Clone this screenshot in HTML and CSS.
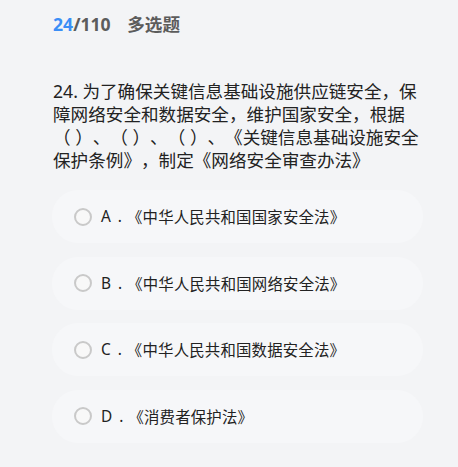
FILE: index.html
```html
<!DOCTYPE html>
<html lang="zh-CN">
<head>
    <meta charset="UTF-8">
    <meta name="viewport" content="width=device-width, initial-scale=1.0">
    <title>多选题</title>
    <link rel="stylesheet" href="styles.css">
</head>
<body>
    <div class="quiz">
        <!-- Header -->
        <div class="quiz-header">
            <span class="current">24</span><span class="total">/110</span>
            <span class="type">多选题</span>
        </div>

        <!-- Question -->
        <div class="question">24. 为了确保关键信息基础设施供应链安全，保障网络安全和数据安全，维护国家安全，根据（ ）、（ ）、（ ）、《关键信息基础设施安全保护条例》，制定《网络安全审查办法》</div>

        <!-- Options -->
        <div class="options">
            <div class="option">
                <span class="radio"></span>
                <span class="option-label">A .</span>
                <span class="option-text">《中华人民共和国国家安全法》</span>
            </div>
            <div class="option">
                <span class="radio"></span>
                <span class="option-label">B .</span>
                <span class="option-text">《中华人民共和国网络安全法》</span>
            </div>
            <div class="option">
                <span class="radio"></span>
                <span class="option-label">C .</span>
                <span class="option-text">《中华人民共和国数据安全法》</span>
            </div>
            <div class="option">
                <span class="radio"></span>
                <span class="option-label">D .</span>
                <span class="option-text">《消费者保护法》</span>
            </div>
        </div>
    </div>
</body>
</html>
```

FILE: styles.css
```css
* {
    margin: 0;
    padding: 0;
    box-sizing: border-box;
}

body {
    font-family: "Noto Sans", "Noto Sans CJK SC", sans-serif;
    background: #f3f4f6;
    color: #222;
    min-height: 100vh;
    text-spacing-trim: space-all;
}

.quiz {
    width: 423px;
    padding: 12px 0 0 52px;
}

.quiz-header {
    font-size: 17.6px;
    font-weight: bold;
    line-height: 24px;
    color: #5c5c5c;
    padding-left: 1px;
}

.quiz-header .current {
    color: #3a8ef6;
}

.quiz-header .type {
    margin-left: 12px;
}

.question {
    margin-top: 44px;
    margin-right: 3px;
    font-size: 17.6px;
    line-height: 23px;
    color: #222;
    padding-left: 1px;
}

.options {
    display: flex;
    flex-direction: column;
    gap: 13.5px;
    margin-top: 18px;
}

.option {
    display: flex;
    align-items: center;
    height: 53px;
    padding-left: 22px;
    background: #f6f7f9;
    border-radius: 26px;
    font-size: 15.4px;
    color: #222;
}

.radio {
    width: 18px;
    height: 18px;
    margin-right: 9px;
    border: 2px solid #c9c9c9;
    border-radius: 50%;
    background: #f8f8f8;
}

.option-label {
    margin-right: 5px;
    word-spacing: 3px;
}

.option-text {
    letter-spacing: 0.2px;
}
```
